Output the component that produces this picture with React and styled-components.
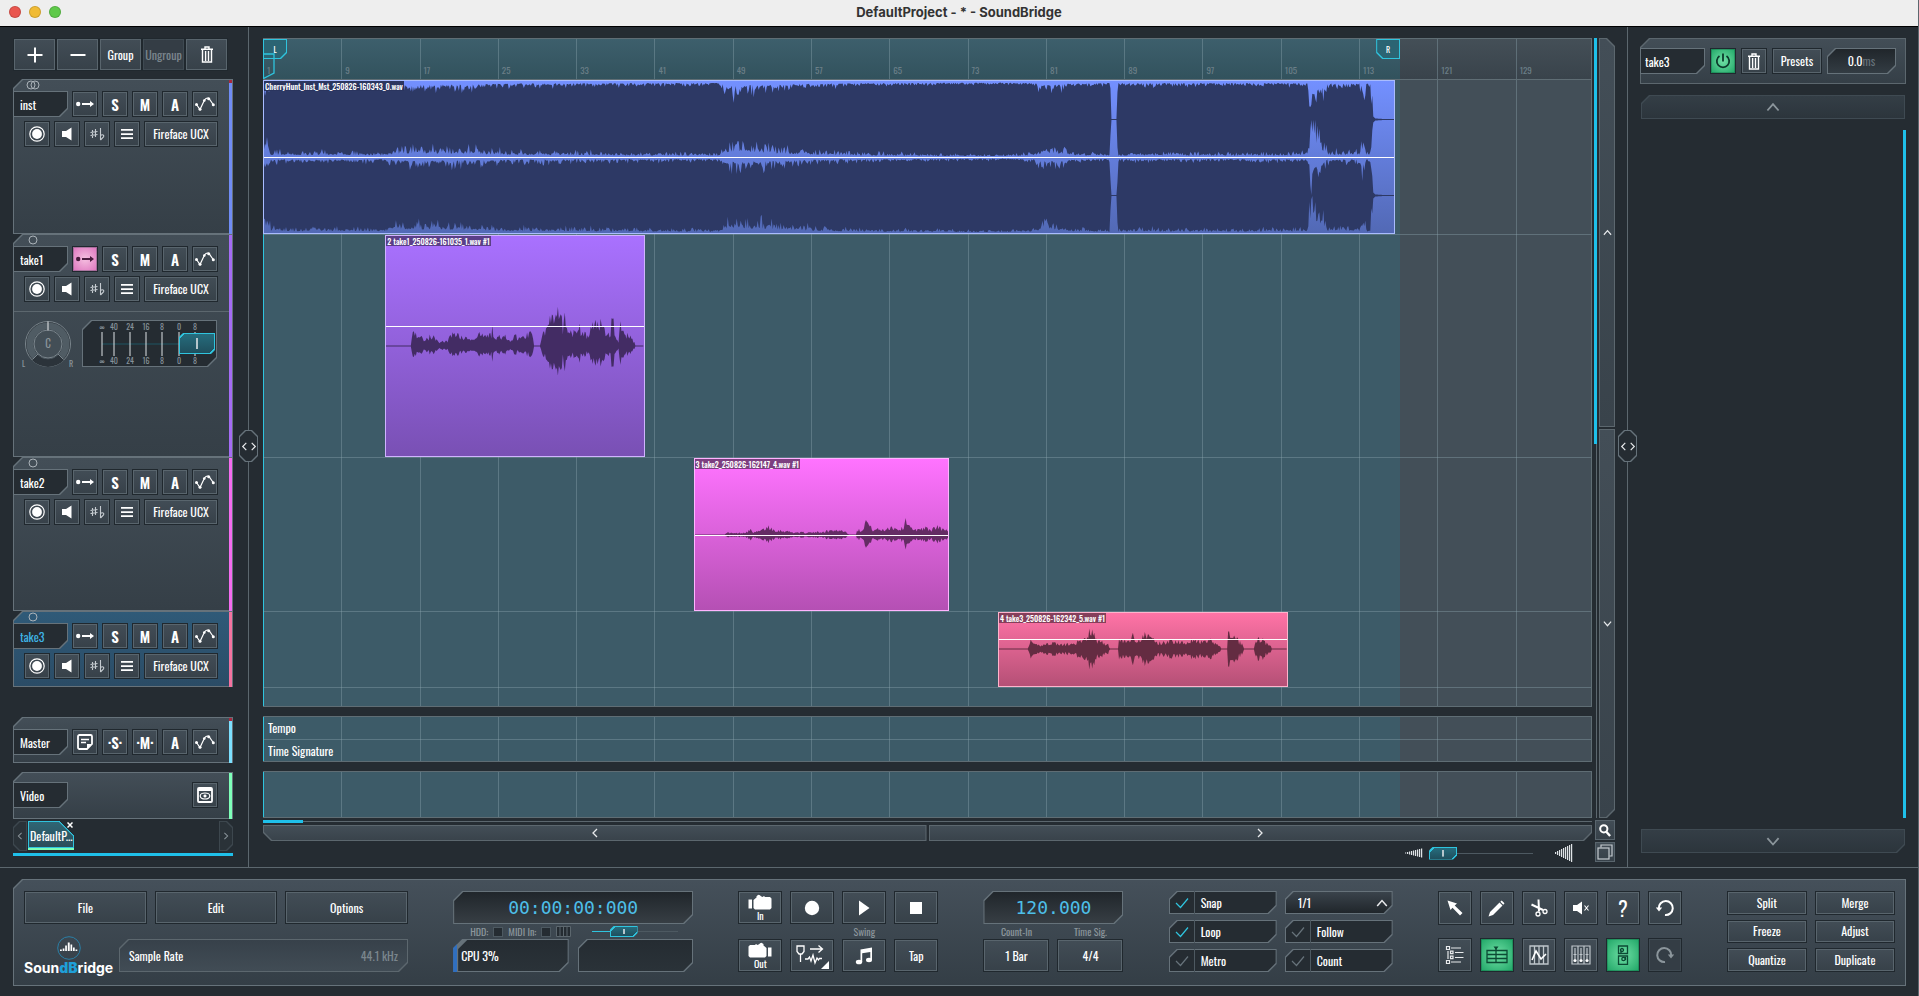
import React, {useState} from "react";
import styled, {createGlobalStyle, css} from "styled-components";

const VISIBLE_BARS = 135.7;
const LOOP_END = 116.2;
const barToPercent = bar => `${(bar / VISIBLE_BARS) * 100}%`;

const rulerBars = Array.from({length: 17}, (_, i) => i * 8);

// deterministic noise so the wave forms do not change between renders
const makeNoise = seed => {
  let s = seed;
  return () => {
    s = (s * 16807) % 2147483647;
    return s / 2147483647;
  };
}

const envelopeAt = (points, x) => {
  for (let i = 1; i < points.length; i++) {
    const [x0, a0] = points[i - 1];
    const [x1, a1] = points[i];
    if (x <= x1) return a0 + ((a1 - a0) * (x - x0)) / (x1 - x0 || 1);
  }
  return points[points.length - 1][1];
}

const makeWavePath = ({width, mid, points, seed, lower = 1}) => {
  const noise = makeNoise(seed);
  const top = [];
  const bottom = [];
  for (let x = 0; x <= width; x++) {
    const amp = envelopeAt(points, x);
    const jitter = amp > 1 ? 0.5 + noise() * 0.6 : 1;
    top.push(`${x},${(mid - amp * jitter).toFixed(1)}`);
    bottom.unshift(`${x},${(mid + amp * jitter * lower).toFixed(1)}`);
  }
  return `M${top.join("L")}L${bottom.join("L")}Z`;
}

const makeFullPath = ({width, mid, points, seed}) => {
  const noise = makeNoise(seed);
  const top = [];
  const bottom = [];
  for (let x = 0; x <= width; x++) {
    const dip = envelopeAt(points, x);
    const up = dip > 34 ? dip : dip * (0.3 + noise() * noise() * 1.4);
    const down = dip > 34 ? dip : dip * (0.4 + noise() * noise() * 1.5);
    top.push(`${x},${(mid - Math.max(0.6, 38 - up)).toFixed(1)}`);
    bottom.unshift(`${x},${(mid + Math.max(0.6, 38 - down)).toFixed(1)}`);
  }
  return `M${top.join("L")}L${bottom.join("L")}Z`;
}

const instPoints = [
  [0, 18], [4, 18], [7, 5], [30, 4], [60, 5], [120, 4], [135, 8], [170, 9], [210, 7], [250, 5], [330, 4], [455, 3],
  [463, 11], [475, 14], [485, 10], [495, 11], [520, 8], [545, 6], [580, 4], [640, 3], [740, 2], [770, 4], [780, 10],
  [800, 7], [812, 4], [846, 3], [848, 38], [853, 38], [855, 3], [880, 4], [960, 3], [1044, 4], [1047, 30], [1051, 34],
  [1056, 22], [1061, 14], [1064, 5], [1096, 5], [1100, 20], [1102, 16], [1103, 3], [1107, 6], [1109, 34], [1112, 37], [1131, 38],
];

const take1Points = [
  [0, 0.5], [25, 0.5], [26, 16], [30, 15], [38, 8], [46, 12], [54, 5], [62, 6], [66, 13], [71, 14], [72, 22], [74, 11], [90, 7],
  [93, 16], [97, 12], [106, 13], [107, 24], [109, 10], [122, 11], [126, 6], [130, 12], [136, 9], [141, 13], [146, 18], [148, 15],
  [149, 0.5], [155, 0.5], [157, 16], [161, 17], [164, 33], [169, 28], [171, 30], [172, 46], [174, 28], [176, 34], [178, 22], [180, 34],
  [184, 14], [188, 15], [191, 26], [196, 20], [204, 11], [207, 24], [213, 26], [218, 34], [221, 15], [226, 18],
  [228, 40], [230, 18], [234, 4], [236, 26], [240, 14], [246, 12], [250, 5], [251, 0.5], [259, 0.5],
];

const take2Points = [
  [0, 0.5], [30, 0.5], [31, 3], [40, 2], [50, 3], [56, 6], [60, 3], [68, 6], [74, 10], [80, 6], [90, 5], [100, 3], [120, 3],
  [135, 5], [140, 6], [150, 5], [154, 2], [155, 0.5], [162, 0.5], [163, 6], [168, 6], [172, 18], [178, 7], [190, 6],
  [197, 10], [205, 7], [209, 8], [212, 18], [216, 14], [219, 5], [230, 9], [237, 6], [245, 10], [250, 6], [255, 6],
];

const take3Points = [
  [0, 0.5], [29, 0.5], [30, 5], [32, 9], [35, 5], [44, 5], [54, 8], [62, 5], [70, 6], [76, 5], [80, 10], [84, 9], [88, 12],
  [91, 23], [94, 26], [97, 11], [104, 9], [110, 5], [112, 0.5], [120, 0.5], [121, 12], [128, 8], [135, 16], [142, 10],
  [148, 18], [155, 13], [160, 7], [170, 9], [178, 10], [185, 8], [194, 11], [205, 8], [213, 10], [222, 5], [224, 0.5],
  [230, 0.5], [231, 18], [235, 17], [240, 11], [246, 5], [247, 0.5], [257, 0.5], [259, 10], [264, 13], [268, 8], [274, 3],
  [275, 0.5], [290, 0.5],
];

const tracks = [
  {
    id: 1, name: "inst", height: 155, color: "#708cf5", stereo: true, peak: true,
    clip: {
      label: "CherryHunt_Inst_Mst_250826-160343_0.wav", start: 0, end: 115.7, width: 1131, height: 154, gain: 50,
      top: "#7390ff", bottom: "#5269b5", wave: "#2d3965", edge: "#a9bcff", tag: "#2a355f",
      paths: [
        makeFullPath({width: 1131, mid: 39, points: instPoints, seed: 11}),
        makeFullPath({width: 1131, mid: 116, points: instPoints, seed: 29}),
      ],
    },
  },
  {
    id: 2, name: "take1", height: 223, color: "#a56cf5", armed: true, open: true,
    clip: {
      label: "2 take1_250826-161035_1.wav #1", start: 12.5, end: 39, width: 259, height: 222, gain: 41,
      top: "#a971ff", bottom: "#7950b4", wave: "#432c64", edge: "#d0b3ff", tag: "#5a3f88",
      paths: [makeWavePath({width: 259, mid: 111, points: take1Points, seed: 5, lower: 0.75})],
    },
  },
  {
    id: 3, name: "take2", height: 154, color: "#f56cf0",
    clip: {
      label: "3 take2_250826-162147_4.wav #1", start: 44, end: 70.1, width: 255, height: 153, gain: 50,
      top: "#ff73ff", bottom: "#b550b4", wave: "#642c64", edge: "#ffb3ff", tag: "#7c3f80",
      paths: [makeWavePath({width: 255, mid: 77, points: take2Points, seed: 17, lower: 0.85})],
    },
  },
  {
    id: 4, name: "take3", height: 76, color: "#f573a0", selected: true,
    clip: {
      label: "4 take3_250826-162342_5.wav #1", start: 75.1, end: 104.7, width: 290, height: 75, gain: 36,
      top: "#ff73a6", bottom: "#b55076", wave: "#642c42", edge: "#ffb3cc", tag: "#853f5b",
      paths: [makeWavePath({width: 290, mid: 37, points: take3Points, seed: 41})],
    },
  },
];

const PlusIcon = () => (
  <svg width="16" height="16" viewBox="0 0 16 16" stroke="#fff" strokeWidth="2"><path d="M8 0.5v15M0.5 8h15"/></svg>
);

const MinusIcon = () => (
  <svg width="16" height="16" viewBox="0 0 16 16" stroke="#fff" strokeWidth="2"><path d="M0.5 8h15"/></svg>
);

const TrashIcon = () => (
  <svg width="12" height="17" viewBox="0 0 12 17" fill="none" stroke="#fff" strokeWidth="1.4">
    <path d="M0 3.2h12M4 3V1h4v2M1.5 3.5V16h9V3.5M4.6 5v10M7.5 5v10"/>
  </svg>
);

const RouteIcon = ({color = "#fff"}) => (
  <svg width="18" height="8" viewBox="0 0 18 8" fill={color}>
    <circle cx="2.2" cy="4" r="2.2"/>
    <path d="M6 3h8V1l4 3-4 3V5H6z"/>
  </svg>
);

const CurveIcon = () => (
  <svg width="20" height="14" viewBox="0 0 20 14" fill="none" stroke="#fff" strokeWidth="1.2">
    <path d="M1.5 7.5l3.5 5 4.5-9.5c1.5-2 3-2.5 4.5-1.5L18.5 8"/>
    <g fill="#fff" stroke="none">
      <circle cx="1.5" cy="7.5" r="1.5"/><circle cx="5" cy="12.3" r="1.5"/><circle cx="9.3" cy="3.5" r="1.3"/>
      <circle cx="13.7" cy="1.7" r="1.5"/><circle cx="18.3" cy="7.8" r="1.5"/>
    </g>
  </svg>
);

const MonitorIcon = () => (
  <svg width="16" height="16" viewBox="0 0 16 16"><circle cx="8" cy="8" r="7.2" fill="none" stroke="#fff" strokeWidth="1.2"/><circle cx="8" cy="8" r="4.9" fill="#fff"/></svg>
);

const SpeakerIcon = () => (
  <svg width="10" height="14" viewBox="0 0 10 14" fill="#fff"><path d="M0 4h4l5.5-3.500v13L4 10H0z"/></svg>
);

const SharpFlatIcon = () => (
  <svg width="15" height="14" viewBox="0 0 15 14" fill="none" stroke="#c5cbd0" strokeWidth="1.1">
    <path d="M2.5 3v8M5.5 2v8M0.5 5.5l7-1M0.5 8.500l7-1M10.5 1v12M10.5 8.5c2-1.500 4-0.500 3 1.500l-3 3"/>
  </svg>
);

const MenuIcon = () => (
  <svg width="12" height="12" viewBox="0 0 12 12" fill="#fff"><path d="M0 1h12v1.800H0zM0 5.200h12V7H0zM0 9.300h12v1.800H0z"/></svg>
);

const NoteIcon = () => (
  <svg width="16" height="16" viewBox="0 0 16 16" fill="none" stroke="#fff" strokeWidth="1.8">
    <path d="M2.5 1h11a1.500 1.500 0 0 1 1.500 1.500V10l-5 5H2.500A1.500 1.500 0 0 1 1 13.500v-11A1.500 1.500 0 0 1 2.500 1z"/>
    <path d="M4 5.500h8M4 8.500h5" strokeWidth="1.3"/>
    <path d="M10 15v-5h5z" fill="#fff" stroke="none"/>
  </svg>
);

const EyeIcon = () => (
  <svg width="16" height="16" viewBox="0 0 16 16" fill="none" stroke="#fff">
    <rect x="1" y="1" width="14" height="14" rx="1" strokeWidth="1.8"/>
    <path d="M1 2.500h14" strokeWidth="3"/>
    <ellipse cx="8" cy="9" rx="4.8" ry="3" strokeWidth="1.2"/>
    <circle cx="8" cy="9" r="1.3" fill="#fff" strokeWidth="0.5"/>
  </svg>
);

const chevronPaths = {
  up: "M1 7.500L5 3l4 4.500",
  down: "M1 3l4 4.500L9 3",
  left: "M7 1L3 5l4 4",
  right: "M3 1l4 4-4 4",
};

const Chevron = ({dir = "up", size = 10, color = "#e8eaec"}) => (
  <svg width={size} height={size} viewBox="0 0 10 10" fill="none" stroke={color} strokeWidth="1.3">
    <path d={chevronPaths[dir]}/>
  </svg>
);

const SearchIcon = () => (
  <svg width="12" height="13" viewBox="0 0 12 13" fill="none" stroke="#fff" strokeWidth="2">
    <circle cx="4.8" cy="4.8" r="3.6"/><path d="M7.300 7.800l3.800 4.200" strokeWidth="2.4"/>
  </svg>
);

const CopyIcon = () => (
  <svg width="16" height="16" viewBox="0 0 16 16" fill="none" stroke="#c5cbd0" strokeWidth="1.2">
    <path d="M4 3.500V1h11v11h-2.500"/><rect x="1" y="4" width="11" height="11"/>
  </svg>
);

const PowerIcon = () => (
  <svg width="16" height="16" viewBox="0 0 16 16" fill="none" stroke="#0c3a2c" strokeWidth="1.8">
    <path d="M4.500 3a6.200 6.200 0 1 0 7 0M8 0.500v8"/>
  </svg>
);

const WedgeIcon = ({bars, step}) => (
  <svg width="20" height="18" viewBox="0 0 20 18" fill="#dfe3e6">
    {Array.from({length: bars}, (_, i) => (
      <rect key={i} x={20 - (bars - i) * 2} y={9 - ((i + 1) * step) / 2} width="1.2" height={(i + 1) * step}/>
    ))}
  </svg>
);

const CamIcon = ({flip}) => (
  <svg width="24" height="16" viewBox="0 0 24 16" fill="#fff">
    <g transform={flip ? "translate(24 0) scale(-1 1)" : undefined}>
      <path d="M0.500 5.500h3.500v9H0.500z"/>
      <path d="M5.500 6l3-2.500V2.300c1.500-2.200 3-2.200 4.500 0L14.500 3l1.500-1 1 1h5l1.500 1.500V14L22 15.500H7L5.500 14z"/>
    </g>
  </svg>
);

const RecordIcon = () => (
  <svg width="16" height="16" viewBox="0 0 16 16"><circle cx="8" cy="8" r="7.2" fill="#fff"/></svg>
);

const PlayIcon = () => (
  <svg width="12" height="16" viewBox="0 0 12 16"><path d="M1 0.500l10.500 7.500L1 15.500z" fill="#fff"/></svg>
);

const StopIcon = () => (
  <svg width="12" height="12" viewBox="0 0 12 12"><path d="M0 0h12v12H0z" fill="#fff"/></svg>
);

const InputWaveIcon = () => (
  <svg width="36" height="26" viewBox="0 0 36 26" fill="none" stroke="#fff" strokeWidth="1.3">
    <path d="M3 3h7v5.500l-2 2.500H5L3 8.500zM6.500 11v8M16 6h12M24.500 2.500L28.500 6l-4 3.500M11 16h3l1.500-2 1.500 4 2-6 2 8 2-5 1.500 2 1-1.500H28"/>
    <path d="M35 18v8h-8z" fill="#fff" stroke="none"/>
  </svg>
);

const SwingIcon = () => (
  <svg width="18" height="18" viewBox="0 0 18 18" fill="#fff">
    <path d="M5.500 2.500L17 0.500v12.500h-1.700V5L7.200 6.300V15H5.500z"/>
    <ellipse cx="4" cy="15" rx="3.2" ry="2.3"/><ellipse cx="14" cy="13" rx="3" ry="2.2"/>
  </svg>
);

const CheckIcon = () => (
  <svg width="14" height="12" viewBox="0 0 14 12" fill="none" stroke="currentColor" strokeWidth="1.2"><path d="M1 6l4.500 4.500L13 1.500"/></svg>
);

const ArrowTool = () => (
  <svg width="16" height="16" viewBox="0 0 16 16" fill="#fff"><path d="M0.500 0.500l9.500 3-2.300 2L15.500 13 13 15.500 5.500 7.800 3.500 10z"/></svg>
);

const PencilTool = () => (
  <svg width="17" height="17" viewBox="0 0 17 17" fill="#fff"><path d="M0.500 16.500l1.500-4.500L11.500 2.500l3 3L5 15zM12.300 1.700L13.700 0.500 16.500 3.300 15.300 4.700z"/></svg>
);

const ScissorsTool = () => (
  <svg width="18" height="18" viewBox="0 0 18 18" fill="none" stroke="#fff" strokeWidth="1.3">
    <path d="M8.500 0.500l0.500 12M1.500 5.500l11.500 5.500" strokeWidth="2"/>
    <circle cx="8" cy="15" r="2"/><circle cx="15" cy="12.5" r="2"/>
  </svg>
);

const MuteTool = () => (
  <svg width="18" height="14" viewBox="0 0 18 14" fill="#fff">
    <path d="M1 4h4l5-3.500v13L5 10H1z"/><path d="M12.500 4.500l4 5M16.500 4.500l-4 5" stroke="#fff" strokeWidth="1.1"/>
  </svg>
);

const TurnTool = ({flip, color = "#fff"}) => (
  <svg width="18" height="18" viewBox="0 0 18 18" fill="none" stroke={color} strokeWidth="2">
    <g transform={flip ? "translate(18 0) scale(-1 1)" : undefined}>
      <path d="M2.800 9.500A7 7 0 1 1 9 16"/>
      <path d="M-0.200 8.500h6.400L3 12.500z" fill={color} stroke="none"/>
    </g>
  </svg>
);

const ListTool = () => (
  <svg width="20" height="20" viewBox="0 0 20 20" fill="none" stroke="#e8eaec" strokeWidth="1.2">
    <path d="M1.500 1.500h3v3h-3zM5.500 6.200h2.500v2.500H5.500zM5.500 11.200h2.500v2.500H5.500zM1.500 15.500h3v3h-3zM6 3h10M10 7.500h8.500M10 12.500h8.500M6 17h10M3 6v8"/>
  </svg>
);

const GridTool = () => (
  <svg width="22" height="18" viewBox="0 0 22 18" fill="none" stroke="#0c4a34" strokeWidth="1.3">
    <path d="M1 4.500h20v12H1zM1 8.500h20M1 12.500h20M10 2v15"/><path d="M7.500 0.500h5L10 4z" fill="#0c4a34" stroke="none"/>
  </svg>
);

const AutomationTool = () => (
  <svg width="20" height="20" viewBox="0 0 20 20" fill="none" stroke="#bfc6cb" strokeWidth="1.3">
    <path d="M1 1h18v18H1zM5.500 1v18M10 1v18M14.500 1v18"/><path d="M3 15l4-9 5 8 5-5" stroke="#fff" strokeWidth="1.6"/>
  </svg>
);

const MixerTool = () => (
  <svg width="20" height="20" viewBox="0 0 20 20" fill="none" stroke="#bfc6cb" strokeWidth="1.2">
    <path d="M1 1h18v18H1zM7 1v18M13 1v18M4 3v11M10 3v11M16 3v11"/>
    <path d="M2.500 9.500h3M8.500 9.500h3M14.500 9.500h3"/>
    <g fill="#fff" stroke="none"><circle cx="4" cy="15.5" r="1.6"/><circle cx="10" cy="15.5" r="1.6"/><circle cx="16" cy="15.5" r="1.6"/></g>
  </svg>
);

const DevicesTool = () => (
  <svg width="12" height="20" viewBox="0 0 12 20" fill="none" stroke="#0c4a34" strokeWidth="1.3">
    <path d="M1.500 1h9v7.500h-9zM1.500 11h9v8.500h-9zM4 8V5.500"/><circle cx="5" cy="5" r="1.5"/><circle cx="6.5" cy="14" r="1.7"/><path d="M8.500 12v3"/>
  </svg>
);

const LogoMark = () => (
  <svg width="24" height="24" viewBox="0 0 24 24">
    <circle cx="12" cy="12" r="11.3" fill="none" stroke="#2b7fa6" strokeWidth="1"/>
    <path fill="#fff" d="M3 13.500h1.800V15H3zM5.700 12.500h1.700V15H5.700zM8.200 9.500h1.700V15H8.200zM10.800 6.500h1.900V15h-1.900zM13.500 8.500h1.700V15h-1.700zM16 11.500h1.700V15H16zM18.500 13.500h1.800V15h-1.800z"/>
  </svg>
);

const PanKnob = () => (
  <svg width="54" height="50" viewBox="0 0 54 50" fill="none" stroke="#7b868d">
    <circle cx="27" cy="24" r="22.5" fill="#2b333a"/>
    <circle cx="27" cy="24" r="18" stroke="#505c64" strokeWidth="7"/>
    <path d="M16 34L11 40A22 22 0 0 0 43 40L38 34A14 14 0 0 1 16 34z" fill="#2b333a" stroke="none"/>
    <circle cx="27" cy="24" r="14" fill="#434e56"/>
    <path d="M17 34l-5.500 5.500M37 34l5.500 5.500"/>
    <path d="M27 1.500v9" stroke="#e8eaec"/>
    <g fill="#8b959b" stroke="none" fontSize="11">
      <text x="27" y="28" textAnchor="middle">C</text>
      <text x="1" y="47" fontSize="8">L</text>
      <text x="48" y="47" fontSize="8">R</text>
    </g>
  </svg>
);

const dbTicks = [[20, "∞"], [32, "40"], [48, "24"], [64, "16"], [80, "8"], [97, "0"], [113, "8"]];

const FaderScale = () => (
  <svg width="132" height="47" viewBox="0 0 132 47">
    <path d="M20 24h92" stroke="#1f5563"/>
    {dbTicks.map(([x, text]) => (
      <g key={x} fill="#87929a" fontSize="8" textAnchor="middle">
        <text x={x} y="10">{text}</text>
        <path d={`M${x} 12v24`} stroke="#dfe3e6"/>
        <text x={x} y="44">{text}</text>
      </g>
    ))}
  </svg>
);

const GridLines = () => (
  <>
    <LoopShade style={{width: barToPercent(LOOP_END)}}/>
    {rulerBars.map(bar => <BarLine key={bar} style={{left: barToPercent(bar)}}/>)}
  </>
);

const TrackHeader = ({track}) => {
  const [name, setName] = useState(track.name);

  return (
    <TrackPanel $height={track.height} $selected={track.selected}>
      <ChannelDots>
        <svg width="14" height="10" viewBox="0 0 14 10" fill="none" stroke="#aab2b8">
          <circle cx={track.stereo ? 5 : 7} cy="5" r="4"/>
          {track.stereo && <circle cx="9" cy="5" r="4"/>}
        </svg>
      </ChannelDots>
      <TrackRow>
        <NameBox $active={track.selected}>
          <input aria-label="Track name" value={name} onChange={e => setName(e.target.value)}/>
        </NameBox>
        <ButtonRow>
          <SquareButton aria-label="Input arm" $tone={track.armed ? "pink" : undefined}>
            <RouteIcon color={track.armed ? "#4a1c3e" : "#fff"}/>
          </SquareButton>
          <SquareButton>S</SquareButton>
          <SquareButton>M</SquareButton>
          <SquareButton>A</SquareButton>
          <SquareButton aria-label="Automation"><CurveIcon/></SquareButton>
        </ButtonRow>
      </TrackRow>
      <SecondRow>
        <SquareButton aria-label="Record"><MonitorIcon/></SquareButton>
        <SquareButton aria-label="Monitor"><SpeakerIcon/></SquareButton>
        <SquareButton aria-label="Transpose"><SharpFlatIcon/></SquareButton>
        <SquareButton aria-label="Menu"><MenuIcon/></SquareButton>
        <DeviceButton>Fireface UCX</DeviceButton>
      </SecondRow>
      {track.open && (
        <MixStrip>
          <PanKnob/>
          <FaderBox>
            <FaderScale/>
            <Slider type="range" aria-label="Volume" defaultValue="100" $thumb={36} $tall={21}/>
          </FaderBox>
        </MixStrip>
      )}
      <ColorStripe $color={track.color} $peak={track.peak}/>
    </TrackPanel>
  );
}

const Clip = ({clip}) => (
  <ClipBox
    $top={clip.top} $bottom={clip.bottom} $edge={clip.edge}
    style={{left: barToPercent(clip.start), width: barToPercent(clip.end - clip.start)}}
  >
    <svg width="100%" height="100%" viewBox={`0 0 ${clip.width} ${clip.height}`} preserveAspectRatio="none">
      {clip.paths.map((d, i) => <path key={i} d={d} fill={clip.wave}/>)}
    </svg>
    <GainLine style={{top: `${clip.gain}%`}}/>
    <ClipLabel $bg={clip.tag}>{clip.label}</ClipLabel>
  </ClipBox>
);

const Toggle = ({label, on}) => {
  const [checked, setChecked] = useState(Boolean(on));

  return (
    <ToggleBox>
      <input type="checkbox" checked={checked} onChange={e => setChecked(e.target.checked)}/>
      <ToggleMark $on={checked}><CheckIcon/></ToggleMark>
      <span>{label}</span>
    </ToggleBox>
  );
}

const App = () => {
  return (
    <Window>
      <GlobalStyle/>
      <TitleBar>
        <Light $color="#e9564f"/>
        <Light $color="#f0bb35"/>
        <Light $color="#5ec949"/>
        <h1>DefaultProject - * - SoundBridge</h1>
      </TitleBar>

      <Main>
        <TrackColumn>
          <Toolbar>
            <ToolbarButton aria-label="Add track"><PlusIcon/></ToolbarButton>
            <ToolbarButton aria-label="Remove track"><MinusIcon/></ToolbarButton>
            <ToolbarButton>Group</ToolbarButton>
            <ToolbarButton disabled>Ungroup</ToolbarButton>
            <ToolbarButton aria-label="Delete"><TrashIcon/></ToolbarButton>
          </Toolbar>
          <TrackList>
            {tracks.map(track => <TrackHeader key={track.id} track={track}/>)}
          </TrackList>
          <MasterPanel>
            <TrackRow>
              <NameBox><input aria-label="Master name" defaultValue="Master"/></NameBox>
              <ButtonRow>
                <SquareButton aria-label="Notes"><NoteIcon/></SquareButton>
                <SquareButton>·S·</SquareButton>
                <SquareButton>·M·</SquareButton>
                <SquareButton>A</SquareButton>
                <SquareButton aria-label="Automation"><CurveIcon/></SquareButton>
              </ButtonRow>
            </TrackRow>
            <ColorStripe $color="#7ce0ff" $peak/>
          </MasterPanel>
          <VideoPanel>
            <TrackRow>
              <NameBox><input aria-label="Video name" defaultValue="Video"/></NameBox>
              <ButtonRow>
                <SquareButton aria-label="Show video"><EyeIcon/></SquareButton>
              </ButtonRow>
            </TrackRow>
            <ColorStripe $color="#7effb8"/>
          </VideoPanel>
          <TabBar>
            <TabArrow aria-label="Previous tab" $side="left"><Chevron dir="left" size={8} color="#8b959b"/></TabArrow>
            <ProjectTab>
              DefaultP...
              <CloseMark aria-hidden="true">
                <svg width="6" height="6" viewBox="0 0 6 6" stroke="#fff" strokeWidth="1.5"><path d="M0.500 0.500l5 5M5.500 0.500l-5 5"/></svg>
              </CloseMark>
            </ProjectTab>
            <TabArrow aria-label="Next tab" $side="right"><Chevron dir="right" size={8} color="#8b959b"/></TabArrow>
          </TabBar>
          <TabLine/>
          <SplitHandle aria-label="Resize tracks"><Chevron dir="left" size={9}/><Chevron dir="right" size={9}/></SplitHandle>
        </TrackColumn>

        <Workspace>
          <WorkRow>
            <Timeline>
              <Ruler>
                <GridLines/>
                {rulerBars.map(bar => (
                  <BarNumber key={bar} style={{left: barToPercent(bar)}}>{bar + 1}</BarNumber>
                ))}
                <LoopFlag $side="left" style={{left: 0}}>L</LoopFlag>
                <LoopFlag $side="right" style={{right: barToPercent(VISIBLE_BARS - LOOP_END)}}>R</LoopFlag>
                <PlayHead width="12" height="26" viewBox="0 0 12 26" fill="none" stroke="#2fc4de" strokeWidth="1.3">
                  <path d="M0 1h11v19L0.500 25.500z"/>
                </PlayHead>
              </Ruler>
              <Lanes>
                <GridLines/>
                {tracks.map(track => (
                  <Lane key={track.id} $height={track.height}><Clip clip={track.clip}/></Lane>
                ))}
              </Lanes>
              <TempoLanes>
                <GridLines/>
                <TempoLane>Tempo</TempoLane>
                <TempoLane>Time Signature</TempoLane>
              </TempoLanes>
              <VideoLane><GridLines/></VideoLane>
            </Timeline>
            <VerticalTrack><VerticalRange/></VerticalTrack>
            <VerticalScroll>
              <ScrollButton aria-label="Scroll up"><Chevron dir="up" size={9}/></ScrollButton>
              <ScrollButton aria-label="Scroll down"><Chevron dir="down" size={9}/></ScrollButton>
            </VerticalScroll>
          </WorkRow>
          <BottomRow>
            <HorizontalArea>
              <HorizontalTrack><HorizontalRange/></HorizontalTrack>
              <HorizontalScroll>
                <ScrollButton aria-label="Scroll left"><Chevron dir="left" size={10}/></ScrollButton>
                <ScrollButton aria-label="Scroll right"><Chevron dir="right" size={10}/></ScrollButton>
              </HorizontalScroll>
              <ZoomRow>
                <WedgeIcon bars={9} step={1}/>
                <ZoomSlider><Slider type="range" aria-label="Zoom" defaultValue="0" $thumb={28} $tall={13} $line/></ZoomSlider>
                <WedgeIcon bars={9} step={2}/>
              </ZoomRow>
            </HorizontalArea>
            <CornerButtons>
              <CornerButton aria-label="Search"><SearchIcon/></CornerButton>
              <CornerButton aria-label="Windows"><CopyIcon/></CornerButton>
            </CornerButtons>
          </BottomRow>
        </Workspace>

        <DeviceColumn>
          <DevicePanel>
            <NameBox $wide><input aria-label="Device track" defaultValue="take3"/></NameBox>
            <SquareButton aria-label="Power" $tone="green"><PowerIcon/></SquareButton>
            <SquareButton aria-label="Remove device"><TrashIcon/></SquareButton>
            <PresetButton>Presets</PresetButton>
            <LatencyBox>0.0<em>ms</em></LatencyBox>
          </DevicePanel>
          <PageButton aria-label="Previous devices"><Chevron dir="up" size={14} color="#8b959b"/></PageButton>
          <DeviceArea/>
          <PageButton aria-label="Next devices" $last><Chevron dir="down" size={14} color="#8b959b"/></PageButton>
          <SplitHandle aria-label="Resize devices" $start><Chevron dir="left" size={9}/><Chevron dir="right" size={9}/></SplitHandle>
        </DeviceColumn>
      </Main>

      <Footer>
        <FooterPanel>
          <MenuGroup>
            <MenuRow>
              <FooterButton>File</FooterButton>
              <FooterButton>Edit</FooterButton>
              <FooterButton>Options</FooterButton>
            </MenuRow>
            <LogoRow>
              <Logo>
                <LogoMark/>
                <LogoText>Soun<b>dB</b>ridge</LogoText>
              </Logo>
              <SampleRate>Sample Rate<em>44.1 kHz</em></SampleRate>
            </LogoRow>
          </MenuGroup>

          <ClockGroup>
            <Lcd>00:00:00:000</Lcd>
            <StatusRow>
              HDD:<Led/>MIDI In:<Led/>
              <svg width="15" height="11" viewBox="0 0 15 11"><path d="M0.500 0.500h14v10h-14z" fill="#252c32" stroke="#5c676e"/><path d="M4 1v9M7.500 1v9M11 1v9" stroke="#5c676e"/></svg>
              <StatusSlider><Slider type="range" aria-label="Position" defaultValue="30" $thumb={28} $tall={11} $line $fill/></StatusSlider>
            </StatusRow>
            <MeterRow>
              <MeterBox $level>CPU 3%</MeterBox>
              <MeterBox/>
            </MeterRow>
          </ClockGroup>

          <TransportGroup>
            <FooterButton><Stack><CamIcon/>In</Stack></FooterButton>
            <FooterButton aria-label="Record"><RecordIcon/></FooterButton>
            <FooterButton aria-label="Play"><PlayIcon/></FooterButton>
            <FooterButton aria-label="Stop"><StopIcon/></FooterButton>
            <SwingCaption>Swing</SwingCaption>
            <FooterButton><Stack><CamIcon flip/>Out</Stack></FooterButton>
            <FooterButton aria-label="Input quantize"><InputWaveIcon/></FooterButton>
            <FooterButton aria-label="Swing"><SwingIcon/></FooterButton>
            <FooterButton>Tap</FooterButton>
          </TransportGroup>

          <TempoGroup>
            <Lcd>120.000</Lcd>
            <Caption>Count-In</Caption>
            <Caption>Time Sig.</Caption>
            <FooterButton>1 Bar</FooterButton>
            <FooterButton>4/4</FooterButton>
          </TempoGroup>

          <ToggleGroup>
            <Toggle label="Snap" on/>
            <SelectBox>
              <select aria-label="Snap value" defaultValue="1/1">
                <option>1/1</option>
              </select>
              <Chevron dir="up" size={12}/>
            </SelectBox>
            <Toggle label="Loop" on/>
            <Toggle label="Follow"/>
            <Toggle label="Metro"/>
            <Toggle label="Count"/>
          </ToggleGroup>

          <ToolGroup>
            <ToolButton aria-label="Select"><ArrowTool/></ToolButton>
            <ToolButton aria-label="Draw"><PencilTool/></ToolButton>
            <ToolButton aria-label="Cut"><ScissorsTool/></ToolButton>
            <ToolButton aria-label="Mute"><MuteTool/></ToolButton>
            <ToolButton $large>?</ToolButton>
            <ToolButton aria-label="Undo"><TurnTool/></ToolButton>
            <ToolButton aria-label="Track list"><ListTool/></ToolButton>
            <ToolButton aria-label="Sequencer" $tone="green"><GridTool/></ToolButton>
            <ToolButton aria-label="Automation"><AutomationTool/></ToolButton>
            <ToolButton aria-label="Mixer"><MixerTool/></ToolButton>
            <ToolButton aria-label="Devices" $tone="green"><DevicesTool/></ToolButton>
            <ToolButton aria-label="Redo" disabled><TurnTool flip color="#8b959b"/></ToolButton>
          </ToolGroup>

          <ActionGroup>
            <FooterButton>Split</FooterButton>
            <FooterButton>Merge</FooterButton>
            <FooterButton>Freeze</FooterButton>
            <FooterButton>Adjust</FooterButton>
            <FooterButton>Quantize</FooterButton>
            <FooterButton>Duplicate</FooterButton>
          </ActionGroup>
        </FooterPanel>
      </Footer>
    </Window>
  );
}

const GlobalStyle = createGlobalStyle`
  * {
    box-sizing: border-box;
  }

  body {
    margin: 0;
    background: #252c32;
    color: #fff;
    font-family: Oswald, "Liberation Sans Narrow", "Liberation Sans", sans-serif;
    font-size: 12px;
    line-height: 16px;
  }

  button, input, select {
    font: inherit;
    color: inherit;
    margin: 0;
  }

  svg {
    display: block;
    flex: none;
  }
`;

// box with cut corners: tl tr br bl, the outer colour shows as a 1px edge
const cutShape = (tl, tr, br, bl) => `polygon(
  ${tl}px 0, calc(100% - ${tr}px) 0, 100% ${tr}px, 100% calc(100% - ${br}px),
  calc(100% - ${br}px) 100%, ${bl}px 100%, 0 calc(100% - ${bl}px), 0 ${tl}px
)`;

const cutBox = (corners, edge, fill) => css`
  position: relative;
  isolation: isolate;
  border: 0;
  background: ${edge};
  clip-path: ${cutShape(...corners)};

  &::before {
    content: "";
    position: absolute;
    inset: 1px;
    z-index: -1;
    background: ${fill};
    clip-path: ${cutShape(...corners)};
  }
`;

const panelFill = "linear-gradient(#434e57, #353f47)";

const tones = {
  pink: "radial-gradient(#f5bfe0, #dd72bd)",
  green: "radial-gradient(#6fe0a5, #1fa566)",
};

const buttonLook = css`
  display: flex;
  align-items: center;
  justify-content: center;
  padding: 0;
  white-space: nowrap;
  border: 1px solid #20282e;
  background: ${props => tones[props.$tone] || "linear-gradient(#424d56, #374149)"};
  box-shadow: inset 0 0 0 1px ${props => (props.$tone ? "rgba(0, 60, 40, 0.25)" : "#59656d")};

  &:disabled {
    background: #343d45;
    box-shadow: inset 0 0 0 1px #3f4a52;
    color: #7b868d;
  }
`;

const Window = styled.div`
  min-height: 100vh;
  display: flex;
  flex-direction: column;
  border-right: 1px solid #5c676e;
`;

const TitleBar = styled.header`
  height: 27px;
  flex: none;
  display: flex;
  align-items: center;
  gap: 8px;
  padding: 0 9px 2px;
  background: #eeeeee;
  border-bottom: 1px solid #000;
  color: #333;

  h1 {
    flex: 1;
    margin: 0 60px 0 0;
    text-align: center;
    font-family: Inter, "Liberation Sans", sans-serif;
    font-size: 13px;
    font-weight: 700;
  }
`;

const Light = styled.span`
  width: 12px;
  height: 12px;
  border-radius: 50%;
  background: ${props => props.$color};
  box-shadow: inset 0 0 0 1px rgba(0, 0, 0, 0.15);
`;

const Main = styled.main`
  flex: 1;
  display: flex;
  border-bottom: 1px solid #5c676e;
`;

const TrackColumn = styled.section`
  position: relative;
  width: 249px;
  flex: none;
  display: flex;
  flex-direction: column;
  padding: 11px 15px 11px 13px;
  border-right: 1px solid #5c676e;
`;

const Toolbar = styled.div`
  display: grid;
  grid-template-columns: repeat(5, 1fr);
  margin: 0 5px 8px 0;
`;

const ToolbarButton = styled.button`
  ${buttonLook}
  height: 33px;
`;

const TrackList = styled.div`
  flex: 1;
`;

const TrackPanel = styled.div`
  ${props => cutBox([9, 0, 0, 0], "#66727a", props.$selected ? "linear-gradient(#2f5a78, #2b4c66)" : panelFill)}
  height: ${props => props.$height}px;
`;

const ChannelDots = styled.div`
  height: 12px;
  padding: 1px 0 0 13px;
`;

const TrackRow = styled.div`
  display: flex;
  justify-content: space-between;
  padding-right: 15px;
`;

const SecondRow = styled.div`
  display: flex;
  gap: 4px;
  padding: 4px 15px 0 11px;
`;

const ButtonRow = styled.div`
  display: flex;
  gap: 4px;
`;

const SquareButton = styled.button`
  ${buttonLook}
  width: 26px;
  height: 26px;
  font-size: 15px;
  font-weight: 600;
`;

const DeviceButton = styled.button`
  ${buttonLook}
  flex: 1;
  height: 26px;
`;

const NameBox = styled.div`
  ${cutBox([0, 0, 8, 0], "#66727a", "#252c32")}
  width: ${props => (props.$wide ? 65 : 55)}px;
  height: 26px;

  input {
    display: block;
    width: 100%;
    height: 26px;
    padding: 0 0 0 ${props => (props.$wide ? 5 : 7)}px;
    border: 0;
    outline: 0;
    background: transparent;
    color: ${props => (props.$active ? "#3fb4e6" : "#fff")};
  }
`;

const ColorStripe = styled.div`
  position: absolute;
  top: 1px;
  right: 1px;
  bottom: 0;
  width: 3px;
  background: ${props => props.$color};
  border-top: ${props => (props.$peak ? "3px solid #a8283e" : "0")};
`;

const MixStrip = styled.div`
  display: flex;
  gap: 7px;
  margin: 9px 4px 0 1px;
  padding: 8px 12px 0 7px;
  border-top: 1px solid #5c676e;
`;

const FaderBox = styled.div`
  ${cutBox([9, 0, 9, 0], "#66727a", "#252c32")}
  flex: 1;
  height: 47px;

  input {
    position: absolute;
    top: 13px;
    left: 2px;
    width: calc(100% - 4px);
  }
`;

const sliderLines = {
  plain: "linear-gradient(#4d5961, #4d5961) center / 100% 1px no-repeat",
  filled: "linear-gradient(90deg, #2fc4de 30%, #4d5961 30%) center / 100% 1px no-repeat",
};

const Slider = styled.input`
  appearance: none;
  width: 100%;
  height: ${props => props.$tall}px;
  background: ${props => (props.$line ? sliderLines[props.$fill ? "filled" : "plain"] : "transparent")};

  &::-webkit-slider-thumb {
    appearance: none;
    width: ${props => props.$thumb}px;
    height: ${props => props.$tall}px;
    border: 1px solid #2fc4de;
    background:
      linear-gradient(#b5c6cc, #b5c6cc) center / 2px 60% no-repeat,
      linear-gradient(135deg, #2fc4de 3px, transparent 3px),
      linear-gradient(315deg, #2fc4de 3px, transparent 3px),
      linear-gradient(#266c7d, #1f4f5d);
    clip-path: ${cutShape(4, 0, 4, 0)};
  }
`;

const MasterPanel = styled.div`
  ${cutBox([9, 0, 0, 0], "#66727a", panelFill)}
  height: 46px;
  padding-top: 12px;
`;

const VideoPanel = styled(MasterPanel)`
  height: 47px;
  margin-top: 9px;
  padding-top: 10px;
`;

const TabBar = styled.div`
  display: flex;
  height: 30px;
  margin-top: 2px;
`;

const TabArrow = styled.button`
  ${props => cutBox(props.$side === "left" ? [6, 0, 0, 6] : [0, 6, 6, 0], "#3d474e", "#2a3238")}
  width: 14px;
  padding: 0 3px;
  margin-left: ${props => (props.$side === "right" ? "auto" : 0)};
`;

const ProjectTab = styled.a.attrs({href: "#"})`
  ${cutBox([0, 14, 0, 0], "#2fc4de", "linear-gradient(#2f6674, #2b4d5a)")}
  clip-path: none;
  background: linear-gradient(45deg, #2fc4de 80%, transparent 80%);
  margin-left: 1px;
  width: 46px;
  height: 29px;
  line-height: 29px;
  padding-left: 2px;
  border-bottom: 2px solid #7effb8;
  color: #fff;
  text-decoration: none;
`;

const CloseMark = styled.span`
  position: absolute;
  top: 1px;
  right: 1px;
`;

const TabLine = styled.div`
  height: 3px;
  margin-top: 2px;
  background: #1fc0ea;
`;

const SplitHandle = styled.button`
  ${cutBox([6, 6, 6, 6], "#66727a", "#252c32")}
  position: absolute;
  top: 403px;
  ${props => (props.$start ? "left: -10px;" : "right: -10px;")}
  z-index: 2;
  display: flex;
  align-items: center;
  justify-content: center;
  width: 19px;
  height: 32px;
  padding: 0;
`;

const Workspace = styled.section`
  flex: 1;
  display: flex;
  flex-direction: column;
  padding: 11px 12px 3px 14px;
`;

const WorkRow = styled.div`
  flex: 1;
  display: flex;
`;

const Timeline = styled.div`
  flex: 1;
  display: flex;
  flex-direction: column;
  margin-right: 2px;
`;

const LoopShade = styled.div`
  position: absolute;
  top: 0;
  bottom: 0;
  left: 0;
  background: #3d5b68;
`;

const BarLine = styled.div`
  position: absolute;
  top: 0;
  bottom: 0;
  width: 1px;
  background: rgba(140, 165, 175, 0.4);

  ${LoopShade} + & {
    background: #2fc4de;
  }
`;

const gridBox = css`
  position: relative;
  background: #434f58;
  border: 1px solid #5f6d74;
  border-left: 0;
`;

const Ruler = styled.div`
  ${gridBox}
  height: 42px;
  background: linear-gradient(#444f57, #39434b);

  ${LoopShade} {
    background: linear-gradient(#3d5f6c, #32525d);
  }
`;

const BarNumber = styled.span`
  position: absolute;
  bottom: 2px;
  padding-left: 4px;
  font-size: 9px;
  line-height: 14px;
  color: #6b7f88;
`;

const LoopFlag = styled.div`
  ${props => cutBox(props.$side === "left" ? [0, 0, 6, 0] : [0, 0, 0, 6], "#2fc4de", "#2b6473")}
  position: absolute;
  top: 0;
  width: 24px;
  height: 20px;
  text-align: center;
  font-size: 8px;
  line-height: 20px;
`;

const PlayHead = styled.svg`
  position: absolute;
  left: 0;
  top: 14px;
`;

const Lanes = styled.div`
  ${gridBox}
  flex: 1;
  border-top: 0;
`;

const Lane = styled.div`
  position: relative;
  height: ${props => props.$height}px;
  border-bottom: 1px solid rgba(140, 165, 175, 0.4);
`;

const ClipBox = styled.div`
  position: absolute;
  top: 0;
  bottom: 0;
  overflow: hidden;
  background: linear-gradient(${props => props.$top}, ${props => props.$bottom});
  border: 1px solid ${props => props.$edge};
`;

const GainLine = styled.div`
  position: absolute;
  left: 0;
  right: 0;
  height: 1px;
  background: #fff;
`;

const ClipLabel = styled.span`
  position: absolute;
  top: 0;
  left: 0;
  padding: 0 1px;
  background: ${props => props.$bg};
  font-size: 8px;
  font-weight: 500;
  line-height: 10px;
  white-space: nowrap;
`;

const TempoLanes = styled.div`
  ${gridBox}
  height: 46px;
  margin: 9px 0;
`;

const TempoLane = styled.div`
  position: relative;
  height: 22px;
  padding-left: 5px;
  line-height: 22px;

  & + & {
    border-top: 1px solid rgba(140, 165, 175, 0.4);
  }
`;

const VideoLane = styled.div`
  ${gridBox}
  height: 47px;
`;

const VerticalTrack = styled.div`
  width: 3px;
  margin-right: 2px;
  background: linear-gradient(#5c676e, #5c676e) right / 1px 100% no-repeat;
`;

const VerticalRange = styled.div`
  height: 52%;
  background: #1fc0ea;
`;

const ScrollButton = styled.button`
  ${cutBox([0, 0, 0, 0], "#5c676e", "linear-gradient(#434e57, #39434b)")}
  display: flex;
  align-items: center;
  justify-content: center;
  padding: 0;
`;

const VerticalScroll = styled.div`
  width: 16px;
  display: grid;
  grid-template-rows: 1fr 1fr;
  gap: 2px;

  ${ScrollButton}:first-child, ${ScrollButton}:first-child::before {
    clip-path: ${cutShape(0, 8, 0, 0)};
  }

  ${ScrollButton}:last-child, ${ScrollButton}:last-child::before {
    clip-path: ${cutShape(0, 0, 8, 0)};
  }
`;

const BottomRow = styled.div`
  display: flex;
  gap: 3px;
  padding-top: 2px;
`;

const HorizontalArea = styled.div`
  flex: 1;
`;

const HorizontalTrack = styled.div`
  height: 3px;
  background: linear-gradient(#5c676e, #5c676e) center / 100% 1px no-repeat;
`;

const HorizontalRange = styled.div`
  width: 3%;
  height: 3px;
  background: #1fc0ea;
`;

const HorizontalScroll = styled.div`
  display: grid;
  grid-template-columns: 1fr 1fr;
  gap: 2px;
  height: 16px;
  margin-top: 2px;

  ${ScrollButton}:first-child, ${ScrollButton}:first-child::before {
    clip-path: ${cutShape(0, 0, 0, 8)};
  }

  ${ScrollButton}:last-child, ${ScrollButton}:last-child::before {
    clip-path: ${cutShape(0, 0, 8, 0)};
  }
`;

const ZoomRow = styled.div`
  display: flex;
  align-items: center;
  justify-content: flex-end;
  gap: 6px;
  height: 22px;
  margin: 1px 19px 0 0;
`;

const ZoomSlider = styled.div`
  display: flex;
  width: 104px;
  margin-right: 14px;
`;

const CornerButtons = styled.div`
  display: grid;
  gap: 2px;
  align-content: start;
`;

const CornerButton = styled.button`
  ${buttonLook}
  width: 20px;
  height: 20px;
  border-color: #59656d;
  box-shadow: none;
`;

const DeviceColumn = styled.section`
  position: relative;
  width: 291px;
  flex: none;
  display: flex;
  flex-direction: column;
  padding: 11px 12px 14px;
  border-left: 1px solid #5c676e;
`;

const DevicePanel = styled.div`
  ${cutBox([9, 0, 0, 0], "#5c676e", panelFill)}
  display: flex;
  gap: 5px;
  height: 46px;
  padding: 10px 10px 10px 0;
`;

const PresetButton = styled.button`
  ${buttonLook}
  width: 50px;
`;

const LatencyBox = styled.div`
  ${cutBox([8, 0, 8, 0], "#66727a", "linear-gradient(#20262b, #333c43)")}
  flex: 1;
  text-align: center;
  line-height: 26px;

  em {
    font-style: normal;
    color: #66727a;
  }
`;

const PageButton = styled.button`
  ${props => cutBox(props.$last ? [0, 0, 8, 0] : [8, 0, 0, 0], "#3f4a52", "linear-gradient(#343e46, #2c353c)")}
  display: flex;
  align-items: center;
  justify-content: center;
  height: 24px;
  margin: 11px 1px ${props => (props.$last ? 0 : 11)}px;
  padding: 0;
`;

const DeviceArea = styled.div`
  flex: 1;
  border-right: 3px solid #1fc0ea;
`;

const Footer = styled.footer`
  padding: 11px 12px 10px 13px;
`;

const FooterPanel = styled.div`
  ${cutBox([9, 0, 0, 0], "#66727a", "linear-gradient(#45505a, #343e46)")}
  display: flex;
  justify-content: space-between;
  height: 107px;
  padding: 12px 11px 14px;
`;

const FooterButton = styled.button`
  ${buttonLook}
  height: 100%;
`;

const MenuGroup = styled.div`
  width: 384px;
  display: flex;
  flex-direction: column;
  justify-content: space-between;
`;

const MenuRow = styled.div`
  display: grid;
  grid-template-columns: repeat(3, 1fr);
  gap: 8px;
  height: 33px;
`;

const LogoRow = styled.div`
  display: flex;
  align-items: flex-end;
  justify-content: space-between;
  height: 33px;
`;

const Logo = styled.div`
  display: flex;
  flex-direction: column;
  align-items: center;
  margin-bottom: -4px;
`;

const LogoText = styled.span`
  font-family: Inter, "Liberation Sans", sans-serif;
  font-size: 14px;
  font-weight: 700;

  b {
    color: #1f9fd8;
  }
`;

const SampleRate = styled.div`
  ${cutBox([9, 0, 9, 0], "#5c676e", "linear-gradient(#37414a, #414c55)")}
  display: flex;
  justify-content: space-between;
  width: 289px;
  height: 33px;
  padding: 0 10px;
  line-height: 33px;

  em {
    font-style: normal;
    color: #7b868d;
  }
`;

const ClockGroup = styled.div`
  width: 240px;
  display: grid;
  grid-template-rows: 33px 1fr 33px;
`;

const Lcd = styled.output`
  ${cutBox([9, 0, 9, 0], "#66727a", "linear-gradient(#20262b, #373e44)")}
  text-align: center;
  font-family: "DejaVu Sans Mono", "Liberation Mono", monospace;
  font-size: 18px;
  line-height: 33px;
  color: #4dbfe8;
`;

const StatusRow = styled.div`
  display: flex;
  align-items: center;
  gap: 5px;
  padding-left: 17px;
  font-size: 10px;
  line-height: 14px;
  color: #8b959b;
`;

const Led = styled.i`
  width: 10px;
  height: 10px;
  background: #252c32;
  border: 1px solid #4d5961;
`;

const StatusSlider = styled.div`
  display: flex;
  width: 86px;
  margin-left: auto;
  margin-right: 15px;
`;

const MeterRow = styled.div`
  display: grid;
  grid-template-columns: 1fr 1fr;
  gap: 9px;
`;

const MeterBox = styled.div`
  ${cutBox([9, 0, 9, 0], "#66727a", "linear-gradient(#252c32, #2a3238)")}
  padding-left: 4px;
  line-height: 33px;
  border-left: ${props => (props.$level ? "4px solid #2f6fc0" : "0")};
`;

const TransportGroup = styled.div`
  display: grid;
  grid-template-columns: repeat(4, 44px);
  grid-template-rows: 33px 1fr 33px;
  column-gap: 8px;
`;

const Stack = styled.span`
  display: flex;
  flex-direction: column;
  align-items: center;
  font-size: 10px;
  line-height: 12px;
`;

const Caption = styled.span`
  text-align: center;
  font-size: 10px;
  line-height: 15px;
  color: #8b959b;
`;

const SwingCaption = styled(Caption)`
  grid-column: 1 / -1;
  padding-left: 52px;
`;

const TempoGroup = styled.div`
  width: 140px;
  display: grid;
  grid-template-columns: 1fr 1fr;
  grid-template-rows: 33px 1fr 33px;
  column-gap: 8px;

  ${Lcd} {
    grid-column: 1 / -1;
  }
`;

const ToggleGroup = styled.div`
  width: 224px;
  display: grid;
  grid-template-columns: 1fr 1fr;
  grid-template-rows: repeat(3, 1fr);
  gap: 6px 8px;
`;

const ToggleBox = styled.label`
  ${cutBox([8, 0, 8, 0], "#66727a", "#252c32")}
  display: flex;
  align-items: center;
  gap: 6px;

  input {
    position: absolute;
    opacity: 0;
  }
`;

const ToggleMark = styled.span`
  display: flex;
  align-items: center;
  height: 100%;
  padding: 0 5px 0 6px;
  border-right: 1px solid #4d5961;
  color: ${props => (props.$on ? "#2fc4de" : "#66727a")};
`;

const SelectBox = styled.div`
  ${cutBox([8, 0, 8, 0], "#66727a", "linear-gradient(#3a434b, #20262b)")}
  display: flex;
  align-items: center;
  padding: 0 5px 0 13px;

  select {
    flex: 1;
    appearance: none;
    padding: 0;
    border: 0;
    background: transparent;
  }
`;

const ToolGroup = styled.div`
  display: grid;
  grid-template-columns: repeat(6, 34px);
  grid-template-rows: 34px 34px;
  align-content: space-between;
  column-gap: 8px;
`;

const ToolButton = styled.button`
  ${buttonLook}
  font-size: ${props => (props.$large ? 20 : 12)}px;
`;

const ActionGroup = styled.div`
  width: 168px;
  display: grid;
  grid-template-columns: 1fr 1fr;
  grid-template-rows: repeat(3, 1fr);
  gap: 5px 8px;
`;

export default App;
